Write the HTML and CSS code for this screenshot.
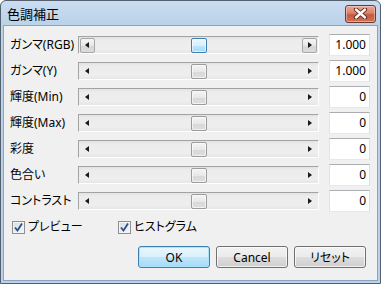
FILE: index.html
```html
<!DOCTYPE html>
<html lang="ja">
<head>
<meta charset="utf-8">
<link rel="stylesheet" href="styles.css">
</head>
<body>
<div class="window">
  <div class="titlebar">
    <span class="title">色調補正</span>
    <div class="close">
      <svg width="15" height="11" viewBox="0 0 15 11">
        <path d="M3 1.5 L12 9.5 M12 1.5 L3 9.5" stroke="#5a1f17" stroke-width="4.2" stroke-linecap="round"/>
        <path d="M3 1.5 L12 9.5 M12 1.5 L3 9.5" stroke="#ffffff" stroke-width="2.4" stroke-linecap="round"/>
      </svg>
    </div>
  </div>
  <div class="client">
    <div class="rows">
      <div class="row">
        <span class="label">ガンマ(RGB)</span>
        <div class="scroll hot">
          <div class="arrow"><span class="tri left"></span></div>
          <div class="track"><div class="thumb"></div></div>
          <div class="arrow"><span class="tri right"></span></div>
        </div>
        <div class="num">1.000</div>
      </div>
      <div class="row">
        <span class="label">ガンマ(Y)</span>
        <div class="scroll">
          <div class="arrow"><span class="tri left"></span></div>
          <div class="track"><div class="thumb"></div></div>
          <div class="arrow"><span class="tri right"></span></div>
        </div>
        <div class="num">1.000</div>
      </div>
      <div class="row">
        <span class="label">輝度(Min)</span>
        <div class="scroll">
          <div class="arrow"><span class="tri left"></span></div>
          <div class="track"><div class="thumb"></div></div>
          <div class="arrow"><span class="tri right"></span></div>
        </div>
        <div class="num">0</div>
      </div>
      <div class="row">
        <span class="label">輝度(Max)</span>
        <div class="scroll">
          <div class="arrow"><span class="tri left"></span></div>
          <div class="track"><div class="thumb"></div></div>
          <div class="arrow"><span class="tri right"></span></div>
        </div>
        <div class="num">0</div>
      </div>
      <div class="row">
        <span class="label">彩度</span>
        <div class="scroll">
          <div class="arrow"><span class="tri left"></span></div>
          <div class="track"><div class="thumb"></div></div>
          <div class="arrow"><span class="tri right"></span></div>
        </div>
        <div class="num">0</div>
      </div>
      <div class="row">
        <span class="label">色合い</span>
        <div class="scroll">
          <div class="arrow"><span class="tri left"></span></div>
          <div class="track"><div class="thumb"></div></div>
          <div class="arrow"><span class="tri right"></span></div>
        </div>
        <div class="num">0</div>
      </div>
      <div class="row">
        <span class="label">コントラスト</span>
        <div class="scroll">
          <div class="arrow"><span class="tri left"></span></div>
          <div class="track"><div class="thumb"></div></div>
          <div class="arrow"><span class="tri right"></span></div>
        </div>
        <div class="num">0</div>
      </div>
    </div>
    <div class="checks">
      <label class="check first">
        <span class="box">
          <svg width="11" height="11" viewBox="0 0 11 11"><path d="M2 5.5 L4.5 8.5 L9 1.5" fill="none" stroke="#2a4d8f" stroke-width="1.8"/></svg>
        </span>
        <span>プレビュー</span>
      </label>
      <label class="check">
        <span class="box">
          <svg width="11" height="11" viewBox="0 0 11 11"><path d="M2 5.5 L4.5 8.5 L9 1.5" fill="none" stroke="#2a4d8f" stroke-width="1.8"/></svg>
        </span>
        <span>ヒストグラム</span>
      </label>
    </div>
    <div class="buttons">
      <button class="btn default">OK</button>
      <button class="btn">Cancel</button>
      <button class="btn">リセット</button>
    </div>
  </div>
</div>
</body>
</html>
```

FILE: styles.css
```css
html, body {
  margin: 0;
  padding: 0;
  background: #ffffff;
}

body {
  font-family: "Noto Sans", "Noto Sans CJK JP", sans-serif;
  font-size: 12px;
  color: #000000;
  font-feature-settings: "palt";
}

.window {
  width: 381px;
  height: 284px;
  box-sizing: border-box;
  border: 1px solid #55606e;
  border-radius: 6px 6px 0 0;
  background: linear-gradient(#cadcf0, #bad2ea 24px, #b9d1ea);
  display: flex;
  flex-direction: column;
}

.titlebar {
  height: 24px;
  flex: none;
  display: flex;
  align-items: center;
  justify-content: space-between;
  padding: 0 4px 0 6px;
}

.title {
  font-family: "Noto Sans CJK JP", sans-serif;
  font-size: 13px;
  line-height: 16px;
  color: #000000;
  margin-top: 1px;
}

.close {
  width: 31px;
  height: 18px;
  box-sizing: border-box;
  border: 1px solid #6e3a30;
  border-radius: 3px;
  background: linear-gradient(#e9a999, #d98068 45%, #c65a3c 55%, #d27358);
  box-shadow: inset 0 0 0 1px rgba(255, 220, 210, 0.5);
  display: flex;
  align-items: center;
  justify-content: center;
  margin-top: 1px;
}

.close svg {
  display: block;
}

.client {
  flex: 1;
  margin: 0 2px 2px 2px;
  border: 1px solid #8ba3bf;
  background: #f0f0f0;
  padding: 8px 7px 12px 6px;
  display: flex;
  flex-direction: column;
}

.rows {
  display: flex;
  flex-direction: column;
  gap: 4px;
}

.row {
  display: flex;
  align-items: center;
  height: 22px;
}

.label {
  width: 68px;
  flex: none;
  white-space: nowrap;
  line-height: 16px;
}

.scroll {
  width: 241px;
  height: 18px;
  box-sizing: border-box;
  flex: none;
  border: 1px solid;
  border-color: #a3a3a3 #ffffff #ffffff #a3a3a3;
  background: linear-gradient(#e2e2e2, #ececec 3px, #eeeeee 12px, #e6e6e6);
  display: flex;
  align-items: center;
  padding: 0 1px;
}

.arrow {
  width: 15px;
  height: 15px;
  box-sizing: border-box;
  flex: none;
  display: flex;
  align-items: center;
  justify-content: center;
  border: 1px solid transparent;
  border-radius: 2px;
}

.scroll.hot .arrow {
  border-color: #a6a6a6;
  background: linear-gradient(#f5f5f5, #e8e8e8 50%, #d6d6d6 51%, #dcdcdc);
}

.tri {
  width: 0;
  height: 0;
  border-top: 3.5px solid transparent;
  border-bottom: 3.5px solid transparent;
}

.tri.left {
  border-right: 4px solid #1a1a1a;
  margin-right: 1px;
}

.tri.right {
  border-left: 4px solid #1a1a1a;
  margin-left: 1px;
}

.track {
  flex: 1;
  height: 15px;
  display: flex;
  justify-content: center;
}

.thumb {
  width: 16px;
  height: 15px;
  box-sizing: border-box;
  border: 1px solid #9b9b9b;
  border-radius: 2px;
  background: linear-gradient(#f4f4f4, #e8e8e8 50%, #d8d8d8 51%, #dedede);
  box-shadow: inset 0 0 0 1px rgba(255, 255, 255, 0.6);
}

.scroll.hot .thumb {
  border-color: #3c7fb1;
  background: linear-gradient(#eaf6fd, #d9f0fc 50%, #bee6fd 51%, #a7d9f5);
}

.num {
  margin-left: 10px;
  width: 41px;
  height: 22px;
  box-sizing: border-box;
  flex: none;
  background: #ffffff;
  border: 1px solid;
  border-color: #abadb3 #dbdfe6 #e3e9ef #e2e3ea;
  text-align: right;
  padding-right: 3px;
  line-height: 20px;
  font-family: "Noto Sans", "Liberation Sans", sans-serif;
  font-size: 12px;
}

.checks {
  display: flex;
  align-items: center;
  height: 14px;
  margin-top: 8px;
  padding-left: 2px;
}

.check {
  display: flex;
  align-items: center;
  gap: 3px;
  line-height: 16px;
}

.check.first {
  width: 106px;
}

.box {
  width: 13px;
  height: 13px;
  box-sizing: border-box;
  border: 1px solid #8e8f8f;
  background: linear-gradient(135deg, #dcdcdc, #f7f7f7);
  box-shadow: inset 0 0 0 1px #f4f4f4;
  display: flex;
  align-items: center;
  justify-content: center;
}

.box svg {
  display: block;
}

.buttons {
  margin-top: 12px;
  display: flex;
  justify-content: flex-end;
  gap: 6px;
  padding-right: 4px;
}

.btn {
  width: 72px;
  height: 22px;
  box-sizing: border-box;
  border: 1px solid #707070;
  border-radius: 3px;
  background: linear-gradient(#f2f2f2, #ebebeb 50%, #dddddd 51%, #cfcfcf);
  box-shadow: inset 0 0 0 1px rgba(255, 255, 255, 0.7);
  font-family: "Noto Sans", "Noto Sans CJK JP", sans-serif;
  font-feature-settings: "palt";
  font-size: 12px;
  color: #000000;
  padding: 0;
}

.btn.default {
  border-color: #3c7fb1;
  background: linear-gradient(#eaf6fd, #d9f0fc 50%, #bee6fd 51%, #a7d9f5);
  box-shadow: inset 0 0 0 1px #a8e5fc;
}
```
